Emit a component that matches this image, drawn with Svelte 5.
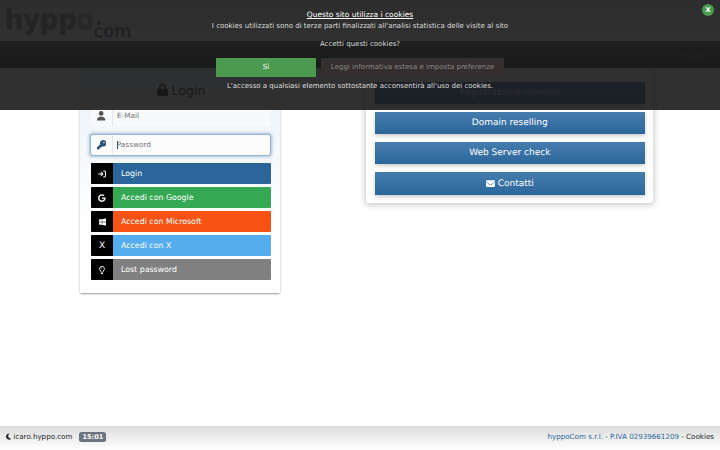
<script>
    const icons = {
        login: { w: 512, d: 'M352 96l64 0c17.7 0 32 14.3 32 32l0 256c0 17.7-14.3 32-32 32l-64 0c-17.7 0-32 14.3-32 32s14.3 32 32 32l64 0c53 0 96-43 96-96l0-256c0-53-43-96-96-96l-64 0c-17.7 0-32 14.3-32 32s14.3 32 32 32zm-9.4 182.6c12.5-12.5 12.5-32.8 0-45.3l-128-128c-12.5-12.5-32.8-12.5-45.3 0s-12.5 32.8 0 45.3L242.7 224 32 224c-17.7 0-32 14.3-32 32s14.3 32 32 32l210.7 0-73.4 73.4c-12.5 12.5-12.5 32.8 0 45.3s32.8 12.5 45.3 0l128-128z' },
        google: { w: 488, d: 'M488 261.8C488 403.3 391.1 504 248 504 110.8 504 0 393.2 0 256S110.8 8 248 8c66.8 0 123 24.5 166.3 64.9l-67.5 64.9C258.5 52.6 94.3 116.6 94.3 256c0 86.5 69.1 156.6 153.7 156.6 98.2 0 135-70.4 140.8-106.9H248v-85.3h236.1c2.3 12.7 3.9 24.9 3.9 41.4z' },
        windows: { w: 448, d: 'M0 93.7l183.6-25.3v177.4H0V93.7zm0 324.6l183.6 25.3V268.4H0v149.9zm203.8 28L448 480V268.4H203.8v177.9zm0-380.6v180.1H448V32L203.8 65.7z' },
        bulb: { w: 384, d: 'M192 0C90 0 16 80 16 176c0 44 17 84 44 115 21 24 38 57 48 93h50c-9-48-31-92-62-126-19-22-32-50-32-82 0-71 57-128 128-128s128 57 128 128c0 32-13 60-32 82-31 34-53 78-62 126h50c10-36 27-69 48-93 27-31 44-71 44-115C368 80 294 0 192 0zM112 416h160v16c0 44-36 80-80 80s-80-36-80-80zM112 176c0-44 36-80 80-80V128c-26 0-48 22-48 48z' },
        user: { w: 448, d: 'M224 256A128 128 0 1 0 224 0a128 128 0 1 0 0 256zm-45.7 48C79.8 304 0 383.8 0 482.3C0 498.7 13.3 512 29.7 512H418.3c16.4 0 29.7-13.3 29.7-29.7C448 383.8 368.2 304 269.7 304H178.3z' },
        key: { w: 512, d: 'M336 352c97.2 0 176-78.8 176-176S433.2 0 336 0S160 78.8 160 176c0 18.7 2.9 36.8 8.3 53.7L7 391c-4.5 4.5-7 10.6-7 17v80c0 13.3 10.7 24 24 24h80c13.3 0 24-10.7 24-24V448h40c13.3 0 24-10.7 24-24V384h40c6.4 0 12.5-2.5 17-7l33.3-33.3c16.9 5.4 35 8.3 53.7 8.3zM376 96a40 40 0 1 1 0 80 40 40 0 1 1 0-80z' },
        lock: { w: 448, d: 'M144 144v48H304V144c0-44.2-35.8-80-80-80s-80 35.8-80 80zM80 192V144C80 64.5 144.5 0 224 0s144 64.5 144 144v48h16c35.3 0 64 28.7 64 64V448c0 35.3-28.7 64-64 64H64c-35.3 0-64-28.7-64-64V256c0-35.3 28.7-64 64-64H80z' },
        envelope: { w: 512, d: 'M48 64C21.5 64 0 85.5 0 112c0 15.1 7.1 29.3 19.2 38.4L236.8 313.6c11.4 8.5 27 8.5 38.4 0L492.8 150.4c12.1-9.1 19.2-23.3 19.2-38.4c0-26.5-21.5-48-48-48H48zM0 176V384c0 35.3 28.7 64 64 64H448c35.3 0 64-28.7 64-64V176L294.4 339.2c-22.8 17.1-54 17.1-76.8 0L0 176z' },
        moon: { w: 384, d: 'M223.5 32C100 32 0 132.3 0 256S100 480 223.5 480c60.6 0 115.5-24.2 155.8-63.4c5-4.9 6.3-12.5 3.1-18.7s-10.1-9.7-17-8.5c-9.8 1.7-19.8 2.6-30.1 2.6c-96.9 0-175.5-78.8-175.5-176c0-65.8 36-123.1 89.3-153.3c6.1-3.5 9.2-10.5 7.7-17.3s-7.3-11.9-14.3-12.5c-6.3-.5-12.6-.8-19-.8z' }
    };

    const logins = [
        { icon: 'login', label: 'Login', kind: 'primary' },
        { icon: 'google', label: 'Accedi con Google', kind: 'google' },
        { icon: 'windows', label: 'Accedi con Microsoft', kind: 'microsoft' },
        { label: 'Accedi con X', kind: 'twitter' },
        { icon: 'bulb', label: 'Lost password', kind: 'lost' }
    ];

    const services = [
        { label: 'Registrazione dominio', visited: true },
        { label: 'Domain reselling' },
        { label: 'Web Server check' },
        { label: 'Contatti', icon: 'envelope' }
    ];

    let showCookies = $state(true);
</script>

{#snippet icon(name)}
    <svg class="icon" viewBox="0 0 {icons[name].w} 512" aria-hidden="true">
        <path d={icons[name].d} />
    </svg>
{/snippet}

<div class="page">
    <header>
        <svg class="logo" viewBox="0 0 140 41" role="img" aria-label="hyppo.com">
            <text class="logo-name" x="5" y="28.5" textLength="89" lengthAdjust="spacingAndGlyphs">hypp<tspan class="logo-o">o</tspan></text>
            <text class="logo-tld" x="93.5" y="36.5" textLength="38" lengthAdjust="spacingAndGlyphs">com</text>
            <circle cx="99" cy="23" r="2" />
        </svg>
    </header>
    <nav><a href="#login">{@render icon('login')}Login</a></nav>

    <main>
        <form class="login-card">
            <h2>{@render icon('lock')}Login</h2>
            <label class="field">
                <span class="addon">{@render icon('user')}</span>
                <input type="email" placeholder="E-Mail" />
            </label>
            <label class="field focused">
                <span class="addon">{@render icon('key')}</span>
                <span class="caret"></span>
                <input type="password" placeholder="Password" />
            </label>
            <div class="login-list">
                {#each logins as item}
                    <button type="button" class="login-btn {item.kind}">
                        <span class="login-icon">
                            {#if item.icon}{@render icon(item.icon)}{:else}<span class="x-mark">X</span>{/if}
                        </span>
                        <span class="login-label">{item.label}</span>
                    </button>
                {/each}
            </div>
        </form>

        <section class="services">
            {#each services as item}
                <button type="button" class="service-btn" class:visited={item.visited}>
                    {#if item.icon}{@render icon(item.icon)}{/if}{item.label}
                </button>
            {/each}
        </section>
    </main>

    <footer>
        <div class="host">{@render icon('moon')}<span>icaro.hyppo.com</span><span class="clock">15:01</span></div>
        <div class="legal"><a href="#company">hyppoCom s.r.l. - P.IVA 02939661209</a> - Cookies</div>
    </footer>
</div>

{#if showCookies}
    <div class="cookie-bar">
        <p class="title">Questo sito utilizza i cookies</p>
        <p class="intro">I cookies utilizzati sono di terze parti finalizzati all'analisi statistica delle visite al sito</p>
        <p class="question">Accetti questi cookies?</p>
        <div class="choices">
            <button type="button" class="yes" onclick={() => (showCookies = false)}>Sì</button>
            <button type="button" class="more">Leggi informativa estesa e imposta preferenze</button>
        </div>
        <p class="note">L'accesso a qualsiasi elemento sottostante acconsentirà all'uso dei cookies.</p>
        <button type="button" class="close" onclick={() => (showCookies = false)}>X</button>
    </div>
{/if}

<style>
    :global(body) {
        margin: 0;
        background: #fff;
        font-family: "DejaVu Sans", sans-serif;
        font-size: 7px;
        color: #212529;
        overflow: hidden;
        text-rendering: geometricPrecision;
    }

    button, input {
        font-family: inherit;
        text-rendering: inherit;
        border: 0;
        padding: 0;
    }

    a {
        text-decoration: none;
    }

    .icon {
        height: 1em;
        fill: currentColor;
        flex: none;
    }

    .page {
        display: flex;
        flex-direction: column;
        height: 450px;
    }

    header {
        height: 41px;
        flex: none;
        background: linear-gradient(#dcdcdc, #fff);
    }

    .logo {
        display: block;
        width: 140px;
        height: 41px;
    }

    .logo-name {
        font: 700 28px "DejaVu Sans", sans-serif;
        fill: #858585;
        stroke: #858585;
        stroke-width: 0.5;
        stroke-linejoin: round;
    }

    .logo-o {
        fill: #a4a4a4;
        stroke: #a4a4a4;
    }

    .logo-tld {
        font: 400 17px "DejaVu Sans", sans-serif;
        fill: #669;
        stroke: #669;
        stroke-width: 0.7;
    }

    .logo circle {
        fill: #669;
    }

    nav {
        display: flex;
        align-items: center;
        justify-content: flex-end;
        height: 27px;
        flex: none;
        padding-right: 12px;
        background: linear-gradient(#3a4340, #242c28);
    }

    nav a {
        display: flex;
        align-items: center;
        gap: 2px;
        color: #777;
        font-size: 7.8px;
    }

    nav .icon {
        height: 7px;
    }

    main {
        display: flex;
        align-items: flex-start;
        flex: 1;
        padding: 0 67px 0 80px;
        justify-content: space-between;
    }

    .login-card {
        box-sizing: border-box;
        width: 200px;
        height: 225px;
        padding: 14px 9px 0 11px;
        border-radius: 2px;
        background: linear-gradient(#e9f1f7, #fff 70%);
        box-shadow: 0 1px 2px rgba(0, 0, 0, 0.4);
    }

    h2 {
        display: flex;
        align-items: center;
        justify-content: center;
        gap: 4px;
        height: 16px;
        margin: 0 0 8px;
        font-size: 12.6px;
        font-weight: 400;
        line-height: 17px;
        color: #111;
    }

    .field {
        display: flex;
        align-items: center;
        height: 20px;
        margin-bottom: 9px;
        border-radius: 2px;
        background: #f8f9fa;
        color: #555;
    }

    .field.focused {
        width: 179px;
        margin-bottom: 8px;
        background: #fcfcfc;
        box-shadow: 0 0 0 0.7px #8fb0cf, 0 0 3px 1.5px rgba(70, 125, 175, 0.45);
    }

    .field.focused .addon {
        color: #2f5578;
    }

    .addon {
        box-sizing: border-box;
        display: flex;
        align-items: center;
        justify-content: center;
        width: 22px;
        height: 20px;
        border-right: 1px solid #e4e8eb;
        font-size: 9.5px;
    }

    .field input {
        flex: 1;
        min-width: 0;
        height: 10px;
        margin-left: 4px;
        background: none;
        font-size: 7.3px;
        line-height: 10px;
        outline: 0;
    }

    .caret {
        width: 0.8px;
        height: 8px;
        margin: 0 -5px 0 4px;
        background: #444;
    }

    .field input::placeholder {
        color: #707478;
        opacity: 1;
    }

    .login-list {
        display: flex;
        flex-direction: column;
        gap: 3px;
        padding-top: 0.4px;
    }

    .login-btn {
        display: flex;
        width: 180px;
        height: 21px;
        border-radius: 1px;
        overflow: hidden;
        color: #fff;
        font-size: 7.85px;
        text-align: left;
    }

    .login-icon {
        display: flex;
        align-items: center;
        justify-content: center;
        width: 22px;
        height: 21px;
        background: #000;
        font-size: 8px;
    }

    .x-mark {
        font-size: 9px;
        line-height: 22px;
    }

    .login-label {
        padding-left: 8px;
        line-height: 22px;
    }

    .primary { background: #2b669a; }
    .google { background: #34a853; }
    .microsoft { background: #f65314; }
    .twitter { background: #55acee; }
    .lost { background: #808080; }

    .services {
        display: flex;
        flex-direction: column;
        gap: 8px;
        box-sizing: border-box;
        width: 287px;
        height: 135px;
        padding: 13.5px 8px 8px 8.5px;
        border-radius: 3px;
        background: #fff;
        box-shadow: 0 1px 6px 1px rgba(0, 0, 0, 0.22);
    }

    .service-btn {
        display: flex;
        align-items: center;
        justify-content: center;
        gap: 3px;
        height: 22.3px;
        flex: none;
        background: linear-gradient(#467daf, #2b669a);
        box-shadow: 0 2px 4px rgba(0, 0, 0, 0.2);
        color: #fff;
        font-size: 9px;
    }

    .service-btn.visited {
        background: linear-gradient(#3a6ca8, #245a96);
        color: #c8d2dc;
    }

    footer {
        display: flex;
        align-items: flex-start;
        justify-content: space-between;
        box-sizing: border-box;
        height: 24px;
        flex: none;
        padding: 5px 6px 0;
        background: linear-gradient(#dcdcdc, #fff);
        font-size: 7.13px;
        line-height: 12px;
    }

    .host {
        display: flex;
        align-items: center;
    }

    .host .icon {
        margin-right: 2px;
    }

    .clock {
        width: 27px;
        height: 10px;
        margin-left: 7px;
        border-radius: 2.5px;
        background: #6c757d;
        color: #fff;
        font-size: 6.5px;
        font-weight: 700;
        line-height: 10px;
        text-align: center;
    }

    .legal a {
        color: #2b669a;
    }

    .cookie-bar {
        position: absolute;
        top: 0;
        left: 0;
        box-sizing: border-box;
        width: 720px;
        height: 110px;
        padding-top: 9px;
        background: rgba(26, 26, 26, 0.9);
        color: #ddd;
        text-align: center;
    }

    .cookie-bar p {
        margin: 0;
        font-size: 7px;
        line-height: 13px;
    }

    .cookie-bar .title {
        color: #fff;
        font-size: 7.5px;
        line-height: 11px;
        text-decoration: underline;
    }

    .cookie-bar .question {
        margin-top: 5px;
    }

    .choices {
        display: flex;
        justify-content: center;
        gap: 5px;
        margin-top: 7px;
    }

    .choices button {
        height: 18.5px;
        border-radius: 1px;
        font-size: 7px;
        line-height: 18px;
    }

    .choices .yes {
        width: 100px;
        background: #4c9a50;
        color: #fff;
    }

    .choices .more {
        width: 183px;
        background: #342e2e;
        color: #888;
    }

    .cookie-bar .note {
        margin-top: 3.5px;
    }

    .cookie-bar .close {
        position: absolute;
        top: 4px;
        right: 6px;
        width: 12px;
        height: 12px;
        border-radius: 50%;
        background: #4c9a50;
        color: #fff;
        font-size: 6.5px;
        font-weight: 700;
        line-height: 12px;
    }
</style>
